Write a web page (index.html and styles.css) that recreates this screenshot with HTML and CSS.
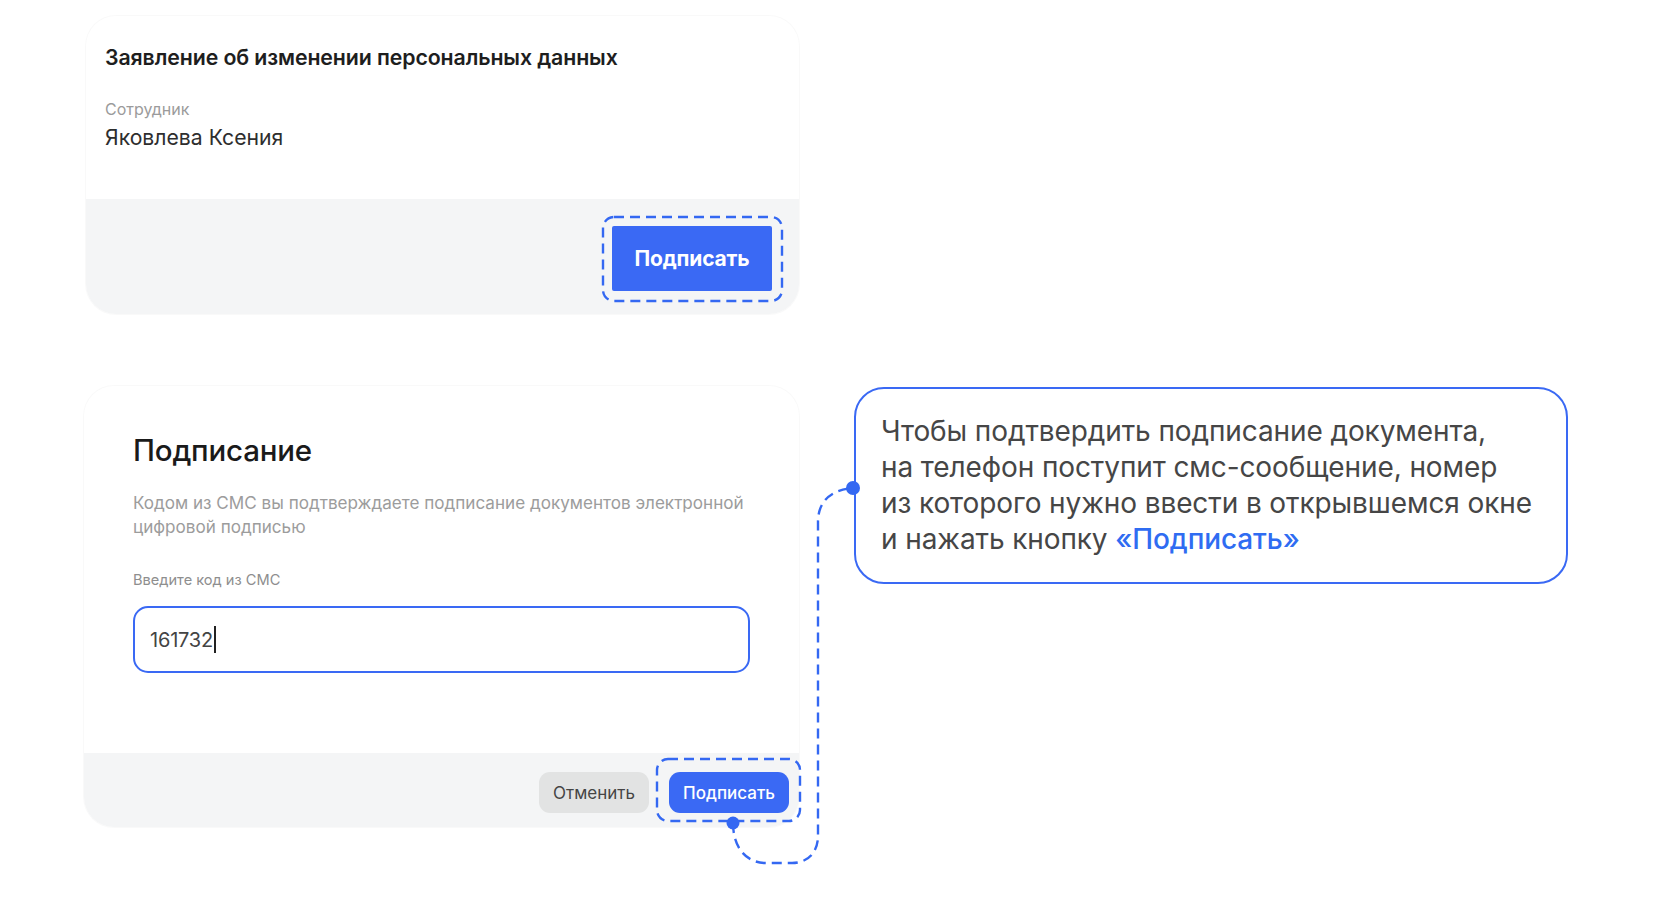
FILE: index.html
```html
<!DOCTYPE html>
<html lang="ru">
<head>
<meta charset="utf-8">
<title>Подписание</title>
<link rel="stylesheet" href="styles.css">
</head>
<body>
<div class="page">
  <section class="card doc-card">
    <div class="doc-body">
      <h2 class="doc-title">Заявление об изменении персональных данных</h2>
      <div class="field-label">Сотрудник</div>
      <div class="field-value">Яковлева Ксения</div>
    </div>
    <div class="doc-footer">
      <div class="focus-ring big-ring">
        <svg class="ring-svg" width="100%" height="100%"><rect x="1" y="1" width="179" height="84" rx="11" ry="11"/></svg>
        <button class="btn-primary-big">Подписать</button>
      </div>
    </div>
  </section>

  <div class="row">
    <section class="card sign-card">
      <div class="sign-body">
        <h1 class="sign-title">Подписание</h1>
        <p class="sign-desc">Кодом из СМС вы подтверждаете подписание документов электронной цифровой подписью</p>
        <div class="input-label">Введите код из СМС</div>
        <div class="code-input"><span class="code-text">161732</span><span class="caret"></span></div>
      </div>
      <div class="sign-footer">
        <button class="btn-cancel">Отменить</button>
        <div class="focus-ring small-ring">
          <svg class="ring-svg" width="100%" height="100%"><rect x="1" y="1" width="143" height="62" rx="11" ry="11"/></svg>
          <button class="btn-primary">Подписать</button>
        </div>
      </div>
    </section>

    <aside class="callout">
      <p>Чтобы подтвердить подписание документа,<br>на телефон поступит смс-сообщение, номер<br>из которого нужно ввести в открывшемся окне<br>и нажать кнопку <span class="hl">«Подписать»</span></p>
    </aside>
  </div>

  <svg class="connector" width="1653" height="899" viewBox="0 0 1653 899">
    <path d="M733 823 C733 846 745 863 766 863 L792 863 C808 863 818 852 818 836 L818 522 C818 502 830 490 853 488" />
    <circle cx="733" cy="823" r="6.5"/>
    <circle cx="853" cy="488" r="7"/>
  </svg>
</div>
</body>
</html>
```

FILE: styles.css
```css
* { box-sizing: border-box; }
html, body { margin: 0; padding: 0; background: #ffffff; }
body {
  font-family: Inter, "Noto Sans", "Liberation Sans", sans-serif;
  color: #222;
  width: 1653px;
  height: 899px;
  overflow: hidden;
}
.page {
  position: relative;
  padding: 16px 0 0 84px;
  display: flex;
  flex-direction: column;
  gap: 72px;
}
.card {
  background: #fff;
  border-radius: 30px;
  box-shadow: 0 0 0 1px rgba(0,0,0,0.025);
}
.doc-card {
  margin-left: 2px;
  width: 713px;
  height: 298px;
  display: flex;
  flex-direction: column;
  overflow: hidden;
}
.doc-body {
  height: 183px;
  padding: 28px 19px 0 19px;
}
.doc-title {
  margin: 0;
  font-size: 21.3px;
  line-height: 26px;
  font-weight: 600;
  color: #1e1e1e;
  letter-spacing: -0.1px;
}
.field-label {
  margin-top: 29px;
  font-size: 16px;
  line-height: 20px;
  color: #9b9b9b;
}
.field-value {
  margin-top: 5px;
  font-size: 21.2px;
  line-height: 26px;
  color: #2e2e2e;
}
.doc-footer {
  flex: 1;
  background: #f4f5f6;
  display: flex;
  justify-content: flex-end;
  align-items: flex-start;
  padding: 17px 16px 0 0;
}
.focus-ring {
  position: relative;
  display: flex;
}
.ring-svg {
  position: absolute;
  left: 0; top: 0;
  overflow: visible;
}
.ring-svg rect {
  fill: none;
  stroke: #3468f2;
  stroke-width: 2.4;
  stroke-dasharray: 10 6;
}
.big-ring { width: 181px; height: 86px; padding: 10px 11px 11px 10px; }
.btn-primary-big {
  width: 160px;
  height: 65px;
  border: none;
  border-radius: 2px;
  background: #3a69f4;
  color: #fff;
  font-family: inherit;
  font-size: 21px;
  font-weight: 700;
  letter-spacing: -0.2px;
}

.row {
  display: flex;
  align-items: flex-start;
  gap: 55px;
}
.sign-card {
  width: 715px;
  height: 441px;
  display: flex;
  flex-direction: column;
}
.sign-body {
  height: 367px;
  padding: 45px 49px 0 49px;
}
.sign-title {
  margin: 0;
  font-size: 29.5px;
  line-height: 38px;
  font-weight: 500;
  color: #1a1a1a;
  letter-spacing: -0.2px;
}
.sign-desc {
  margin: 22px 0 0 0;
  font-size: 17.1px;
  line-height: 24px;
  color: #9c9c9c;
  width: 650px;
}
.input-label {
  margin-top: 31px;
  font-size: 14.6px;
  line-height: 20px;
  color: #8e8e8e;
}
.code-input {
  margin-top: 16px;
  width: 617px;
  height: 67px;
  border: 2.5px solid #3a69f4;
  border-radius: 15px;
  display: flex;
  align-items: center;
  padding-left: 15px;
}
.code-text {
  font-size: 20px;
  color: #444;
  letter-spacing: -0.2px;
}
.caret {
  width: 1.5px;
  height: 27px;
  background: #222;
  margin-left: 1px;
}
.sign-footer {
  flex: 1;
  background: #f4f5f6;
  border-radius: 0 0 30px 30px;
  display: flex;
  justify-content: flex-end;
  align-items: flex-start;
  padding: 5px 0 0 0;
  gap: 7px;
}
.btn-cancel {
  margin-top: 14px;
  width: 110px;
  height: 41px;
  border: none;
  border-radius: 11px;
  background: #e2e3e3;
  color: #454545;
  font-family: inherit;
  font-size: 17px;
}
.small-ring {
  width: 145px;
  height: 64px;
  padding: 14px 11px 9px 13px;
  margin-right: -2px;
}
.btn-primary {
  width: 120px;
  height: 41px;
  border: none;
  border-radius: 11px;
  background: #3a69f4;
  color: #fff;
  font-family: inherit;
  font-size: 17px;
  font-weight: 500;
}

.callout {
  margin-top: 1px;
  width: 714px;
  height: 197px;
  border: 2.5px solid #3a69f4;
  border-radius: 30px;
  background: #fff;
  padding: 24px 0 0 25px;
}
.callout p {
  margin: 0;
  font-size: 28px;
  line-height: 36px;
  color: #464646;
  letter-spacing: -0.1px;
}
.callout .hl {
  color: #2f6cf2;
  font-weight: 500;
}

.connector {
  position: absolute;
  left: 0; top: 0;
  pointer-events: none;
}
.connector path {
  fill: none;
  stroke: #3468f2;
  stroke-width: 2.4;
  stroke-dasharray: 10 6;
}
.connector circle { fill: #3468f2; }
```
